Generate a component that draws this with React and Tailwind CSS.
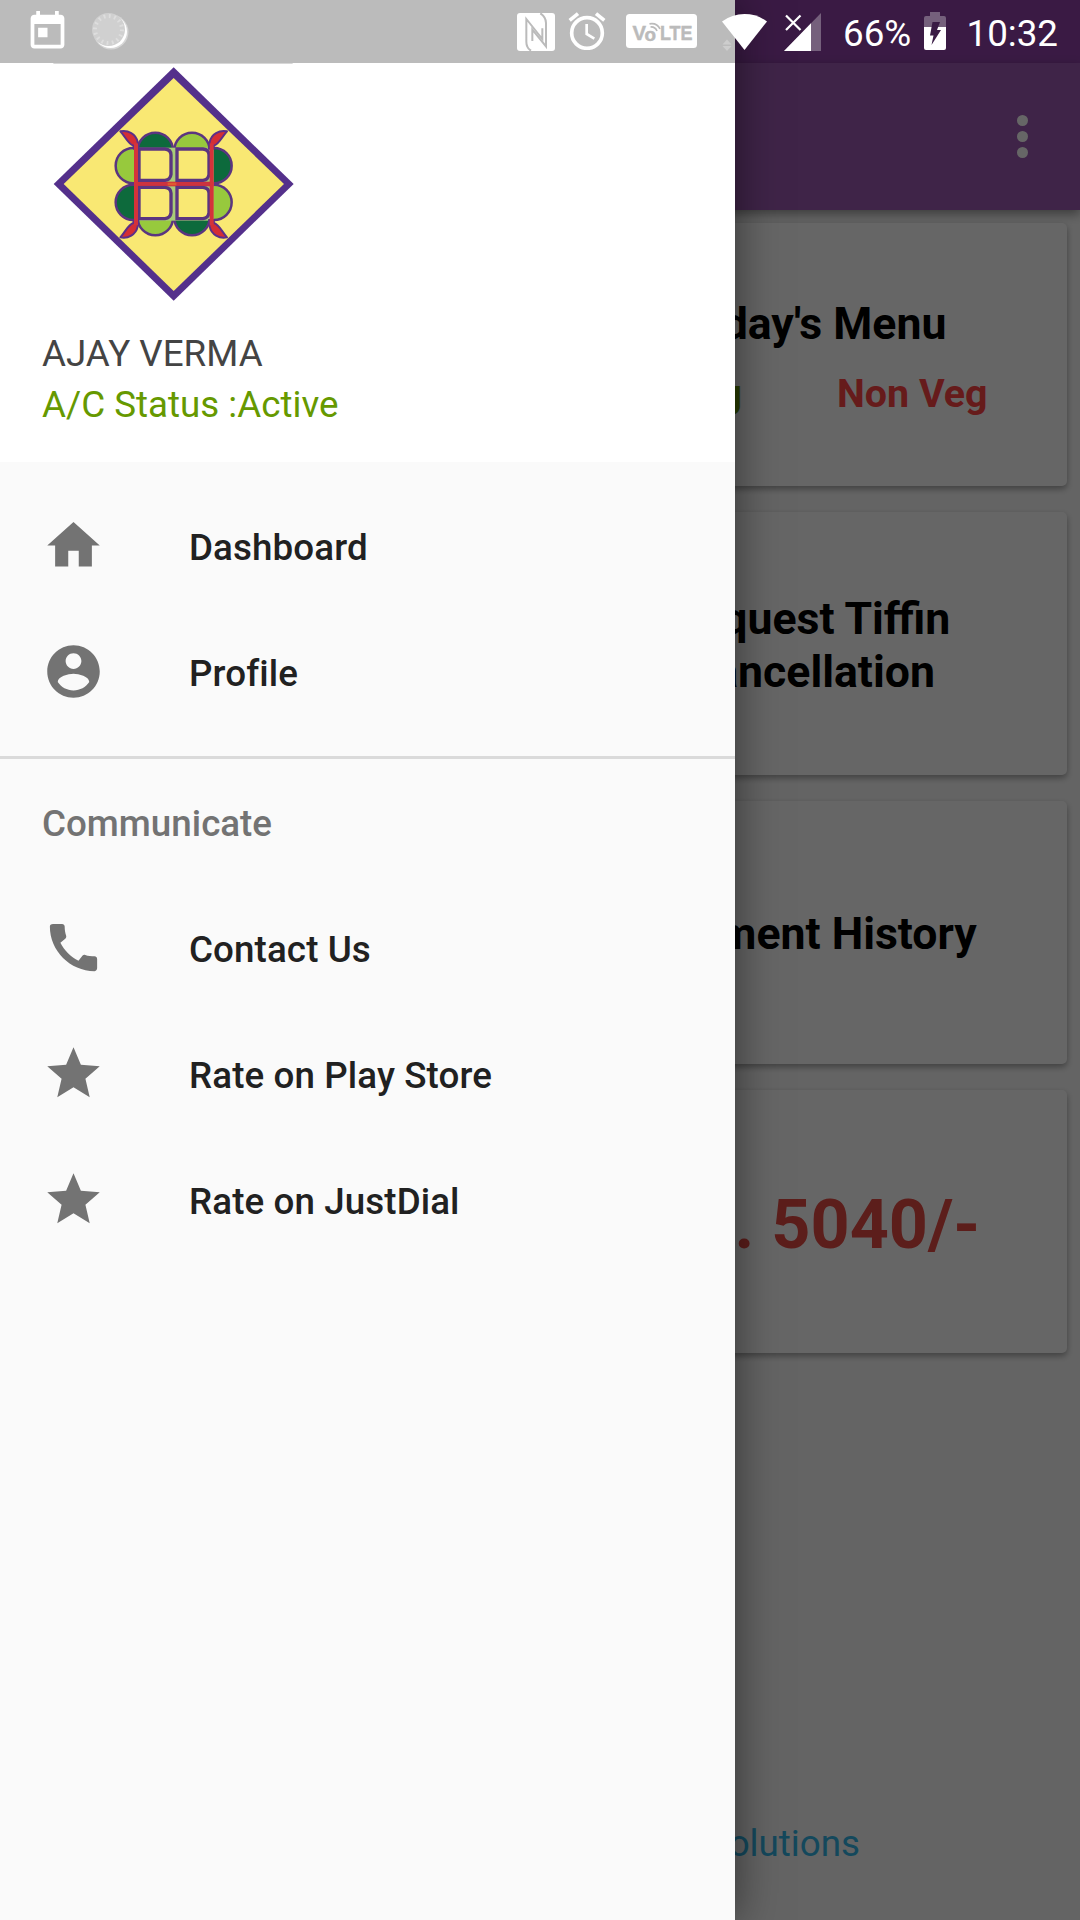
const icons = {
  home: 'M10 20v-6h4v6h5v-8h3L12 3 2 12h3v8z',
  profile:
    'M12 2C6.48 2 2 6.48 2 12s4.48 10 10 10 10-4.48 10-10S17.52 2 12 2zm0 3c1.66 0 3 1.34 3 3s-1.34 3-3 3-3-1.34-3-3 1.34-3 3-3zm0 14.2c-2.5 0-4.71-1.28-6-3.22.03-1.99 4-3.08 6-3.08 1.99 0 5.97 1.09 6 3.08-1.29 1.94-3.5 3.22-6 3.22z',
  call: 'M20.01 15.38c-1.23 0-2.42-.2-3.53-.56-.35-.12-.74-.03-1.01.24l-1.57 1.97c-2.83-1.35-5.48-3.9-6.89-6.83l1.95-1.66c.27-.28.35-.67.24-1.02-.37-1.11-.56-2.3-.56-3.53 0-.54-.45-.99-.99-.99H4.19C3.65 3 3 3.24 3 3.99 3 13.28 10.73 21 20.01 21c.71 0 .99-.63.99-1.18v-3.45c0-.54-.45-.99-.99-.99z',
  star: 'M12 17.27L18.18 21l-1.64-7.03L22 9.24l-7.19-.61L12 2 9.19 8.63 2 9.24l5.46 4.73L5.82 21z',
};

const mainItems = [
  { label: 'Dashboard', icon: icons.home },
  { label: 'Profile', icon: icons.profile },
];

const communicateItems = [
  { label: 'Contact Us', icon: icons.call },
  { label: 'Rate on Play Store', icon: icons.star },
  { label: 'Rate on JustDial', icon: icons.star },
];

function Horn({ transform }) {
  return (
    <path
      transform={transform}
      d="M361 394 C384 389 408 402 413 426 L415 446 L401 446 L400 437 C384 432 376 410 361 394z"
      fill="#d42e34"
      stroke="#5b3088"
      strokeWidth="6"
      strokeLinejoin="round"
    />
  );
}

function Logo() {
  const petals = [
    [466, 451, '#0d6a3c'],
    [576, 451, '#97c93d'],
    [400, 497, '#97c93d'],
    [642, 497, '#0d6a3c'],
    [400, 607, '#0d6a3c'],
    [642, 607, '#97c93d'],
    [466, 653, '#97c93d'],
    [576, 653, '#0d6a3c'],
  ];
  const windows = [
    [417, 447],
    [531, 447],
    [417, 562],
    [531, 562],
  ];
  return (
    <svg className="w-[242px] h-[242px]" viewBox="156 189 726 726">
      <rect x="160" y="189" width="718" height="2" fill="#c4c4c4" />
      <path d="M521 202 L881 552 L521 902 L161 552z" fill="#54308b" />
      <path d="M521 234 L852 552 L521 873 L191 552z" fill="#f9e873" />
      {petals.map(([cx, cy, fill]) => (
        <circle key={`${cx}-${cy}`} cx={cx} cy={cy} r="53" fill={fill} stroke="#5b3580" strokeWidth="7.5" />
      ))}
      <rect x="403" y="443" width="238" height="219" fill="#a9cb78" />
      <rect x="403" y="545" width="238" height="14" fill="#d42e34" />
      {windows.map(([x, y]) => (
        <path
          key={`${x}-${y}`}
          d={`M${x} ${y} h78 q18 2 18 18 v58 q-2 16 -18 18 h-78z`}
          fill="#f9e873"
          stroke="#5b3580"
          strokeWidth="10"
        />
      ))}
      <Horn />
      <Horn transform="translate(1042 0) scale(-1 1)" />
      <Horn transform="translate(0 1106) scale(1 -1)" />
      <Horn transform="translate(1042 1106) scale(-1 -1)" />
      <rect x="402" y="430" width="12" height="246" fill="#d5333a" />
      <rect x="629" y="430" width="12" height="246" fill="#d5333a" />
      <rect x="414" y="547" width="215" height="10" fill="#cc3340" />
      <rect x="503" y="548" width="26" height="8" fill="#e0592f" />
    </svg>
  );
}

function StatusBar() {
  return (
    <div className="absolute inset-x-0 top-0 h-[63px] flex items-start text-white">
      <svg className="w-[45px] h-[45px] ml-[25px] mt-[9px]" viewBox="0 0 24 24" fill="currentColor">
        <path d="M19 3h-1V1h-2v2H8V1H6v2H5c-1.11 0-1.99.9-1.99 2L3 19c0 1.1.89 2 2 2h14c1.1 0 2-.9 2-2V5c0-1.1-.9-2-2-2zm0 16H5V8h14v11zM7 10h5v5H7z" />
      </svg>
      <svg className="w-[40px] h-[40px] ml-[20px] mt-[11px]" viewBox="0 0 40 40">
        <circle cx="21" cy="21" r="17.5" fill="#d6d6d6" />
        <circle cx="20.5" cy="20.5" r="16.5" fill="#fff" />
        <circle cx="18.5" cy="18.5" r="16.5" fill="#d0d0d0" />
        <circle cx="18.5" cy="18.5" r="13.5" fill="none" stroke="#dedede" strokeWidth="4" strokeDasharray="1.8 3.5" />
      </svg>

      {/* NFC */}
      <svg className="w-[38px] h-[38px] ml-[386.5px] mt-[12.5px]" viewBox="0 0 114 114">
        <rect width="114" height="114" rx="9" fill="#fff" />
        <g fill="none" stroke="#bbb" strokeWidth="6">
          <path d="M42 113 Q28 104 28 86 V18 L76 78 V46" />
          <path d="M70 1 Q87 12 87 30 V100 L46 50 V84" />
        </g>
      </svg>

      {/* Alarm */}
      <svg className="w-[38px] h-[38px] ml-[13px] mt-[12px]" viewBox="0 0 114 114" fill="none" stroke="#fff">
        <circle cx="57" cy="63" r="46" strokeWidth="11" />
        <path d="M5 25 L30 5 M84 5 L109 25" strokeWidth="11" />
        <path d="M56 36 V66 L79 80" strokeWidth="8" />
      </svg>

      {/* VoLTE */}
      <svg className="w-[71px] h-[34px] ml-[20.5px] mt-[14px]" viewBox="0 0 71 34">
        <rect width="71" height="34" rx="3.5" fill="#fff" />
        <g fill="#bbb" stroke="#bbb" strokeWidth="0.5" fontFamily="Liberation Sans, Arial, sans-serif" fontWeight="700">
          <text x="6.5" y="25.5" fontSize="20.5" textLength="13.5" lengthAdjust="spacingAndGlyphs">V</text>
          <text x="18.5" y="26.5" fontSize="19" textLength="11.5" lengthAdjust="spacingAndGlyphs">o</text>
          <text x="34" y="25.5" fontSize="20.5" textLength="32.5" lengthAdjust="spacingAndGlyphs">LTE</text>
        </g>
        <path d="M23.5 9.8 Q31 8.500 34 15 M24.500 13 Q29 12.500 31 17" stroke="#bbb" strokeWidth="1.7" fill="none" />
      </svg>

      {/* Wifi, straddles the drawer edge */}
      <svg className="w-[48px] h-[38px] ml-[22px] mt-[13px]" viewBox="0 0 48 38">
        <path d="M8 26.5 l4.5 5 h-9z M3.500 33 h9 l-4.500 5z" fill="#cdcdcd" />
        <path d="M3 8.500 Q13 1 25.500 1 Q38 1 48 8.500 L25.500 37z" fill="#fff" />
      </svg>

      {/* Mobile signal */}
      <svg className="w-[37px] h-[38px] ml-[16.5px] mt-[12.5px]" viewBox="0 0 37 38">
        <path d="M37 0 V38 H0z" fill="#75607c" />
        <path d="M27 10.300 V38 H0z" fill="#fff" />
        <path d="M2 2.500 L16 16.500 M16 2.500 L2 16.500" stroke="#3a1b45" strokeWidth="5" />
        <path d="M2 2.500 L16.500 17 M16.500 2.500 L2 17" stroke="#fff" strokeWidth="2.200" />
      </svg>

      <span className="ml-[22.5px] mt-[12px] w-[70px] text-[36.75px] leading-[43px] whitespace-nowrap">66%</span>

      <svg className="w-[22px] h-[38px] ml-[10.5px] mt-[12px]" viewBox="0 0 22 38">
        <path d="M6 0 H16 V4 H20 Q22 4 22 6 V16 H0 V6 Q0 4 2 4 H6z" fill="#75607c" />
        <path d="M0 15 H22 V36 Q22 38 20 38 H2 Q0 38 0 36z" fill="#fff" />
        <path d="M8.500 10 H16 L13 18 H17 L7.500 33 L9.500 23.500 H6z" fill="#3a1b45" />
      </svg>

      <span className="ml-[21px] mt-[12px] text-[36.75px] leading-[43px] whitespace-nowrap">10:32</span>
    </div>
  );
}

function Card({ children }) {
  return (
    <div className="h-[263px] pt-[5px] bg-white rounded-[5px] shadow-[0_3px_6px_rgba(0,0,0,0.35)] flex flex-col items-center justify-center text-center text-[44.6px] leading-[53px] font-bold text-black">
      {children}
    </div>
  );
}

function NavItem({ label, icon }) {
  return (
    <li className="h-[126px] px-[42px] flex items-center gap-[84px]">
      <svg className="w-[63px] h-[63px] -mt-[2px]" viewBox="0 0 24 24" fill="#737373">
        <path d={icon} />
      </svg>
      <span className="pt-[2px] text-[36.75px] leading-[43px] font-medium tracking-[0.1px] text-[#212121]">{label}</span>
    </li>
  );
}

function Drawer() {
  return (
    <aside className="absolute left-0 top-0 w-[735px] h-[1920px] bg-[#fafafa] shadow-[0_0_42px_rgba(0,0,0,0.5)]">
      <div className="h-[63px] bg-[#bbbbbb]" />
      <div className="h-[399px] bg-white">
        <div className="pl-[52px] h-[269px]">
          <Logo />
        </div>
        <div className="pl-[42px] text-[36.75px] leading-[43px]">
          <p className="text-[#444444]">AJAY VERMA</p>
          <p className="mt-[8px] text-[#669900]">A/C Status :Active</p>
        </div>
      </div>
      <nav className="pt-[21px]">
        <ul className="pb-[21px]">
          {mainItems.map((item) => (
            <NavItem key={item.label} {...item} />
          ))}
        </ul>
        <div className="border-t-[3px] border-[#dadada]">
          <h2 className="h-[126px] pl-[42px] pt-[4px] flex items-center text-[36.75px] font-medium text-[#737373]">
            Communicate
          </h2>
          <ul>
            {communicateItems.map((item) => (
              <NavItem key={item.label} {...item} />
            ))}
          </ul>
        </div>
      </nav>
    </aside>
  );
}

export default function App() {
  return (
    <div className="relative w-[1080px] h-[1920px] overflow-hidden bg-[#fafafa] font-['Roboto',sans-serif]">
      <div className="h-full flex flex-col">
        <div className="h-[63px] bg-[#9143aa]" />
        <header className="h-[147px] bg-[#9d5ab4] shadow-[0_4px_10px_rgba(0,0,0,0.4)] flex items-center justify-end pr-[52px]">
          <div className="flex flex-col gap-[5px]">
            <span className="size-[11px] rounded-full bg-white" />
            <span className="size-[11px] rounded-full bg-white" />
            <span className="size-[11px] rounded-full bg-white" />
          </div>
        </header>

        <main className="flex-1 pt-[12.5px] pl-[553px] pr-[13px] flex flex-col gap-[26px]">
          <Card>
            <p>Today's Menu</p>
            <div className="mt-[20px] -mb-[2px] pl-[41px] flex gap-[95px] text-[39.4px] leading-[46px]">
              <span className="text-[#669900]">Veg</span>
              <span className="text-[#ff4444]">Non Veg</span>
            </div>
          </Card>
          <Card>
            <p>
              Request Tiffin
              <br />
              Cancellation
            </p>
          </Card>
          <Card>
            <p>Payment History</p>
          </Card>
          <Card>
            <p className="pl-[16px] pt-[2px] text-[68.25px] leading-[80px] text-[#e64b44]">Rs. 5040/-</p>
          </Card>
        </main>

        <footer className="pr-[220px] pb-[55px] text-right text-[36.75px] leading-[43px] text-[#33b5e5]">
          Solutions
        </footer>
      </div>

      <div className="absolute inset-0 bg-black/60" />
      <Drawer />
      <StatusBar />
    </div>
  );
}
